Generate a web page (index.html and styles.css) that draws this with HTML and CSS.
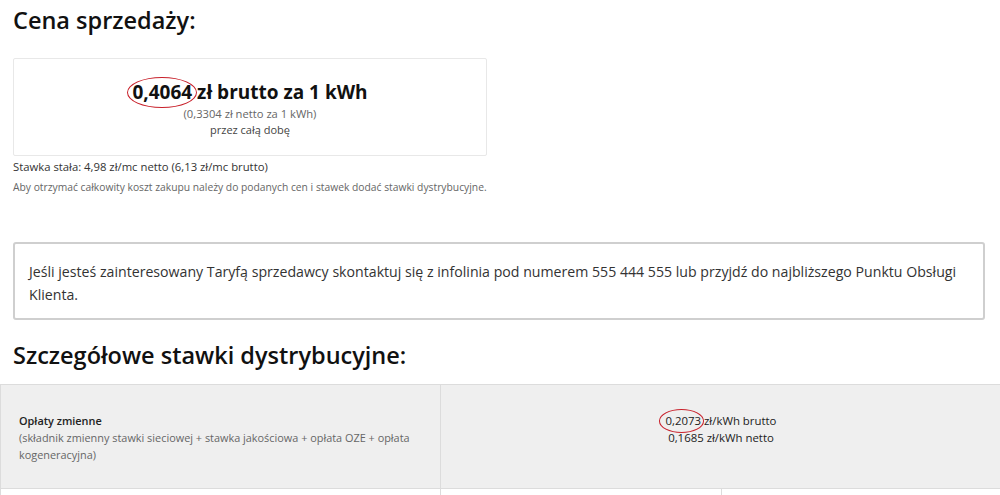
FILE: index.html
```html
<!DOCTYPE html>
<html lang="pl">
<head>
  <meta charset="UTF-8">
  <title>Cena sprzedaży</title>
  <link rel="stylesheet" href="styles.css">
</head>
<body>
  <section class="sale">
    <h1>Cena sprzedaży:</h1>
    <div class="price-box">
      <p class="price-main"><span class="marked">0,4064<span class="ring"></span></span> zł brutto za 1 kWh</p>
      <p class="price-net">(0,3304 zł netto za 1 kWh)</p>
      <p class="price-time">przez całą dobę</p>
    </div>
    <p class="fixed-rate">Stawka stała: 4,98 zł/mc netto (6,13 zł/mc brutto)</p>
    <p class="note">Aby otrzymać całkowity koszt zakupu należy do podanych cen i stawek dodać stawki dystrybucyjne.</p>
  </section>

  <div class="info">
    Jeśli jesteś zainteresowany Taryfą sprzedawcy skontaktuj się z infolinia pod numerem 555 444 555 lub przyjdź do najbliższego Punktu Obsługi Klienta.
  </div>

  <h1 class="dist-title">Szczegółowe stawki dystrybucyjne:</h1>
  <table class="rates">
    <tr class="shaded">
      <td class="label">
        <strong>Opłaty zmienne</strong><br>
        (składnik zmienny stawki sieciowej + stawka jakościowa + opłata OZE + opłata kogeneracyjna)
      </td>
      <td class="value" colspan="2">
        <span class="marked small">0,2073<span class="ring"></span></span> zł/kWh brutto<br>
        0,1685 zł/kWh netto
      </td>
    </tr>
    <tr>
      <td class="label">&nbsp;</td>
      <td class="half">&nbsp;</td>
      <td class="half">&nbsp;</td>
    </tr>
  </table>
</body>
</html>
```

FILE: styles.css
```css
body {
  font-family: 'Open Sans', 'Noto Sans', sans-serif;
  margin: 0;
  background: #fff;
  color: #1a1a1a;
  overflow: hidden;
}
p {
  margin: 0;
}
h1 {
  font-size: 23.5px;
  font-weight: 600;
  margin: 0;
  color: #111;
}
.sale {
  padding: 0 13px;
}
.sale h1 {
  padding-top: 2px;
  height: 56px;
  line-height: 36px;
}
.price-box {
  width: 474px;
  height: 98px;
  border: 1px solid #e8e8e8;
  border-radius: 2px;
  box-sizing: border-box;
  text-align: center;
  padding-top: 19px;
}
.price-main {
  font-size: 19px;
  font-weight: 700;
  line-height: 28px;
  color: #111;
}
.price-net, .price-time {
  font-size: 11.2px;
  line-height: 16px;
  color: #444;
}
.price-time {
  font-size: 11px;
}
.price-net {
  color: #666;
}
.marked {
  position: relative;
}
.ring {
  position: absolute;
  left: -5px;
  right: -5px;
  top: -2px;
  bottom: -3px;
  border: 1.5px solid #c8202a;
  border-radius: 50%;
}
.marked.small .ring {
  left: -7px;
  right: -3px;
  top: -4px;
  bottom: -5px;
}
.fixed-rate {
  font-size: 11.3px;
  line-height: 16px;
  margin-top: 3px;
  color: #333;
}
.note {
  font-size: 10.3px;
  line-height: 16px;
  margin-top: 4px;
  color: #666;
}
.info {
  margin: 47px 13px 0 13px;
  width: 972px;
  box-sizing: border-box;
  border: 2px solid #cfcfcf;
  border-radius: 3px;
  padding: 16px 8px 12px 14px;
  font-size: 14.15px;
  line-height: 23px;
  color: #333;
}
.dist-title {
  padding: 0 13px;
  margin-top: 17px;
  line-height: 36px;
  height: 47px;
}
.rates {
  border-collapse: collapse;
  width: 1002px;
  table-layout: fixed;
  font-size: 10.9px;
  line-height: 17px;
}
.rates td {
  border: 1px solid #dcdcdc;
  vertical-align: top;
}
.rates .shaded td {
  background: #efefef;
  height: 104px;
  box-sizing: border-box;
  padding-top: 27px;
}
.rates .label {
  width: 440px;
  padding-left: 18px;
  padding-right: 12px;
  color: #666;
  box-sizing: border-box;
}
.rates .label strong {
  color: #222;
  font-weight: 600;
}
.rates .value {
  text-align: center;
  color: #222;
  font-weight: 500;
  font-size: 11.4px;
}
.rates .half {
  height: 20px;
}
```
